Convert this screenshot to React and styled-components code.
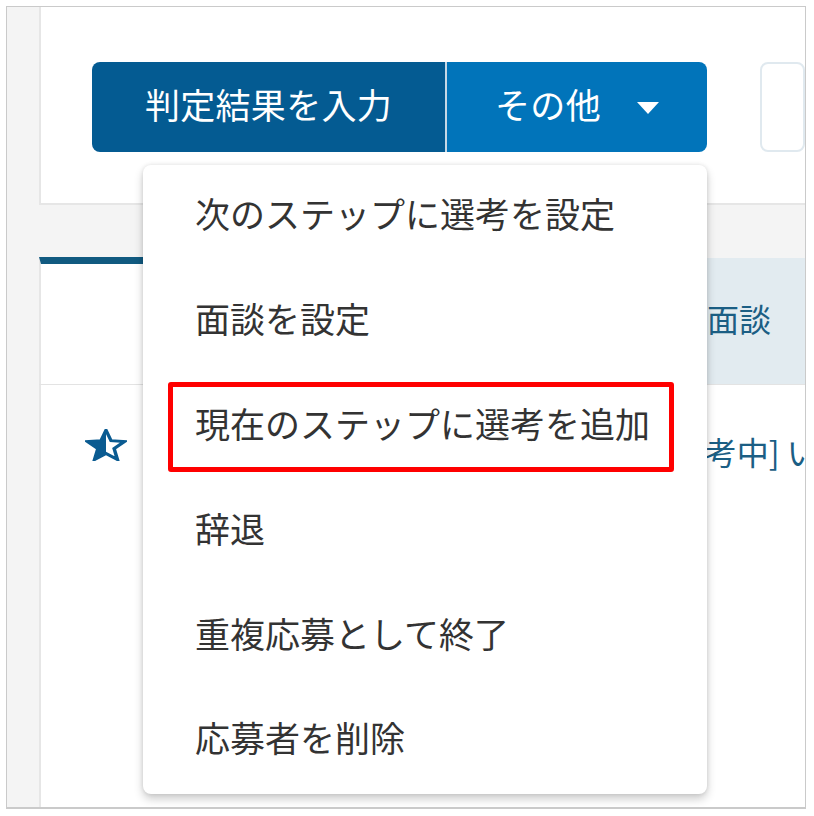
import React from "react";
import styled, { createGlobalStyle } from "styled-components";

const GlobalStyle = createGlobalStyle`
  body {
    margin: 0;
    background: #ffffff;
    font-family: "Noto Sans CJK JP", "Noto Sans", sans-serif;
  }
`;

const Frame = styled.div`
  position: relative;
  box-sizing: border-box;
  margin: 6px 0 0 6px;
  width: 800px;
  height: 803px;
  border: 1px solid #cacaca;
  border-bottom-width: 2px;
  background: #f4f4f4;
  overflow: hidden;
  display: flex;
  padding-left: 32px;
`;

const Main = styled.div`
  flex: 1;
  min-width: 0;
  display: flex;
  flex-direction: column;
`;

const TopCard = styled.div`
  box-sizing: border-box;
  height: 198px;
  background: #ffffff;
  border-left: 2px solid #e6e6e6;
  border-bottom: 2px solid #e6e6e6;
  padding: 55px 0 0 51px;
`;

const Toolbar = styled.div`
  display: flex;
  gap: 53px;
`;

const SplitButton = styled.div`
  position: relative;
  z-index: 5;
  display: flex;
  height: 90px;
`;

const ActionButton = styled.div`
  box-sizing: border-box;
  display: flex;
  align-items: center;
  justify-content: center;
  gap: 36px;
  width: ${(p) => p.$width}px;
  padding-bottom: 8px;
  background: ${(p) => p.$bg};
  border-radius: ${(p) => p.$radius};
  color: #ffffff;
  font-size: 35px;
  letter-spacing: 0.3px;
`;

const Divider = styled.div`
  width: 2px;
  background: #c6d8e6;
`;

const Caret = styled.span`
  width: 0;
  height: 0;
  border-left: 11px solid transparent;
  border-right: 11px solid transparent;
  border-top: 12px solid #ffffff;
  margin-top: 10px;
`;

const GhostButton = styled.div`
  box-sizing: border-box;
  width: 140px;
  height: 90px;
  border: 2px solid #e0e9ef;
  border-radius: 8px;
  background: #ffffff;
`;

const Menu = styled.ul`
  position: absolute;
  top: calc(100% + 13px);
  left: 51px;
  width: 564px;
  margin: 0;
  padding: 0;
  list-style: none;
  background: #ffffff;
  border-radius: 8px;
  box-shadow: 0 5px 10px rgba(0, 0, 0, 0.2), 0 0 4px rgba(0, 0, 0, 0.1);
`;

const MenuItem = styled.li`
  position: relative;
  box-sizing: border-box;
  display: flex;
  align-items: center;
  height: 104.8px;
  padding: 0 0 9px 52px;
  font-size: 35px;
  color: #333333;
  white-space: nowrap;

  &::after {
    content: "";
    display: ${(p) => (p.$marked ? "block" : "none")};
    position: absolute;
    top: 7px;
    bottom: 7px;
    left: 25px;
    right: 33px;
    border: 5px solid #ff0000;
    border-radius: 3px;
  }
`;

const Tabs = styled.div`
  display: flex;
  box-sizing: border-box;
  height: 128px;
  margin-top: 52px;
  border-bottom: 1px solid #e3e3e3;
`;

const Tab = styled.div`
  box-sizing: border-box;
  display: flex;
  align-items: center;
  flex: ${(p) => (p.$grow ? 1 : "none")};
  width: ${(p) => (p.$grow ? "auto" : "290px")};
  padding: 0 0 6px ${(p) => p.$pad}px;
  margin-top: ${(p) => (p.$active ? 0 : 1)}px;
  background: ${(p) => (p.$active ? "#ffffff" : "#e2ebf0")};
  border-top: ${(p) => (p.$active ? "7px solid #115a80" : "none")};
  border-left: ${(p) => (p.$active ? "2px solid #e6e6e6" : "none")};
  color: #1b5e84;
  font-size: 32px;
  white-space: nowrap;
`;

const ListPanel = styled.div`
  flex: 1;
  background: #ffffff;
  border-left: 2px solid #e6e6e6;
`;

const Row = styled.div`
  display: grid;
  grid-template-columns: 42px 535px auto;
  align-items: center;
  height: 131px;
  padding-left: 44px;
  color: #1b5e84;
  font-size: 32px;
  white-space: nowrap;
`;

const StarIcon = styled.svg`
  width: 42px;
  height: 32px;
  margin-bottom: 12px;
`;

const STAR =
  "50,0 62.9,32.2 97.6,34.6 70.9,56.8 79.4,90.5 50,72 20.6,90.5 29.1,56.8 2.4,34.6 37.1,32.2";

function HalfStar() {
  return (
    <StarIcon viewBox="-4 -4 108 99" preserveAspectRatio="none">
      <defs>
        <clipPath id="leftHalf">
          <rect x="-4" y="-4" width="54" height="100" />
        </clipPath>
      </defs>
      <polygon points={STAR} fill="#0a5b91" clipPath="url(#leftHalf)" />
      <polygon
        points={STAR}
        fill="none"
        stroke="#0a5b91"
        strokeWidth="9"
        strokeLinejoin="miter"
      />
    </StarIcon>
  );
}

const menuItems = [
  "次のステップに選考を設定",
  "面談を設定",
  "現在のステップに選考を追加",
  "辞退",
  "重複応募として終了",
  "応募者を削除",
];

export default function App() {
  return (
    <>
      <GlobalStyle />
      <Frame>
        <Main>
          <TopCard>
            <Toolbar>
              <SplitButton>
                <ActionButton $width={353} $bg="#045b92" $radius="8px 0 0 8px">
                  判定結果を入力
                </ActionButton>
                <Divider />
                <ActionButton $width={260} $bg="#0174ba" $radius="0 8px 8px 0">
                  その他
                  <Caret />
                </ActionButton>
                <Menu>
                  {menuItems.map((label, i) => (
                    <MenuItem key={label} $marked={i === 2}>
                      {label}
                    </MenuItem>
                  ))}
                </Menu>
              </SplitButton>
              <GhostButton />
            </Toolbar>
          </TopCard>
          <Tabs>
            <Tab $active $pad={100} />
            <Tab $pad={40} />
            <Tab $grow $pad={88}>面談</Tab>
          </Tabs>
          <ListPanel>
            <Row>
              <HalfStar />
              <span />
              <span>[選考中] いいえ</span>
            </Row>
          </ListPanel>
        </Main>
      </Frame>
    </>
  );
}
